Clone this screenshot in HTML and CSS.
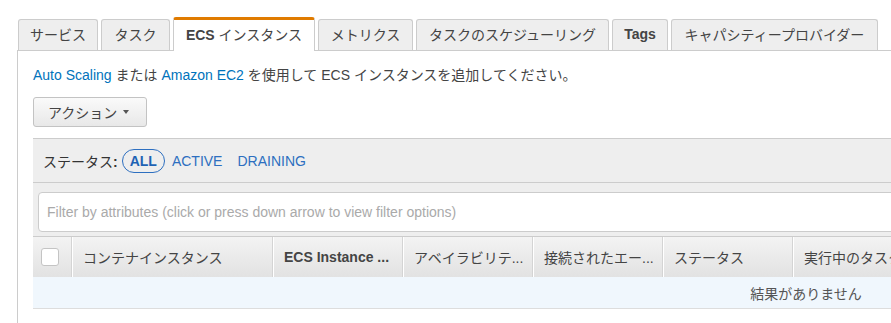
FILE: index.html
```html
<!DOCTYPE html>
<html lang="ja">
<head>
<meta charset="utf-8">
<link rel="stylesheet" href="styles.css">
</head>
<body>
<div class="page">
  <div class="tabs">
    <div class="tab"><span>サービス</span></div>
    <div class="tab"><span>タスク</span></div>
    <div class="tab active"><span><b>ECS</b> インスタンス</span></div>
    <div class="tab"><span>メトリクス</span></div>
    <div class="tab"><span>タスクのスケジューリング</span></div>
    <div class="tab"><span><b>Tags</b></span></div>
    <div class="tab"><span>キャパシティープロバイダー</span></div>
  </div>
  <div class="panel">
    <p class="intro"><a class="link">Auto Scaling</a> または <a class="link">Amazon EC2</a> を使用して ECS インスタンスを追加してください。</p>
    <button class="btn">アクション <span class="caret"></span></button>
    <div class="grid">
      <div class="statusbar">
        <span class="label">ステータス<b>:</b></span>
        <span class="pill">ALL</span>
        <span class="flink">ACTIVE</span>
        <span class="flink">DRAINING</span>
      </div>
      <div class="filterbar">
        <div class="filter">Filter by attributes (click or press down arrow to view filter options)</div>
      </div>
      <div class="thead">
        <div class="th th-check"><span class="checkbox"></span></div>
        <div class="th w201">コンテナインスタンス</div>
        <div class="th w130"><b>ECS Instance ...</b></div>
        <div class="th w130">アベイラビリテ...</div>
        <div class="th w130">接続されたエー...</div>
        <div class="th w130">ステータス</div>
        <div class="th wrest">実行中のタスク数</div>
      </div>
      <div class="empty">結果がありません</div>
    </div>
  </div>
</div>
</body>
</html>
```

FILE: styles.css
```css
* { box-sizing: border-box; }
html, body { margin: 0; padding: 0; background: #fff; overflow: hidden; }
body {
  font-family: "Liberation Sans", "Noto Sans CJK JP", sans-serif;
  font-size: 14px;
  color: #444;
  width: 891px;
  height: 323px;
}
b { font-weight: 700; }
.page { padding: 17px 0 0 17px; width: 1700px; height: 323px; overflow: hidden; display: flex; flex-direction: column; }

.tabs {
  display: flex;
  align-items: flex-end;
  gap: 3px;
  padding-left: 1px;
  height: 33px;
  flex: none;
}
.tab {
  height: 32px;
  padding: 0 10px 3px;
  background: #eee;
  border: 1px solid #ccc;
  border-bottom: none;
  border-radius: 3px 3px 0 0;
  display: flex;
  align-items: center;
  justify-content: center;
  color: #444;
  white-space: nowrap;
  margin-bottom: -1px;
}
.tab.active {
  background: #fff;
  height: 34px;
  border-top: 3px solid #e07b00;
  padding-bottom: 3px;
  position: relative;
  z-index: 1;
}
.tabs .tab:nth-child(1) { width: 80px; }
.tabs .tab:nth-child(2) { width: 69px; }
.tabs .tab:nth-child(3) { width: 142px; }
.tabs .tab:nth-child(4) { width: 95px; }
.tabs .tab:nth-child(5) { width: 193px; }
.tabs .tab:nth-child(6) { width: 56px; }
.tabs .tab:nth-child(7) { width: 207px; }

.panel {
  flex: 1;
  border-top: 1px solid #ccc;
  border-left: 1px solid #ccc;
  padding: 16px 0 0 15px;
}
.intro { margin: 0; line-height: 16px; color: #444; }
.link { color: #0073bb; text-decoration: none; }

.btn {
  display: flex;
  align-items: center;
  gap: 6px;
  margin-top: 14px;
  height: 30px;
  width: 114px;
  padding: 0 0 0 14px;
  font: inherit;
  color: #444;
  background: linear-gradient(#fafafa, #e8e8e8);
  border: 1px solid #c3c3c3;
  border-radius: 3px;
}
.caret {
  width: 0; height: 0;
  border-left: 3.5px solid transparent;
  border-right: 3.5px solid transparent;
  border-top: 4px solid #555;
}

.grid { margin-top: 11px; width: 1546px; }
.statusbar {
  height: 45px;
  background: #eee;
  border-top: 1px solid #ccc;
  border-bottom: 1px solid #ccc;
  display: flex;
  align-items: center;
  padding-left: 10px;
}
.label { color: #333; margin-right: 4px; }
.pill {
  font-weight: 700;
  color: #1e63b4;
  border: 1px solid #2d6fc0;
  border-radius: 12px;
  height: 24px;
  padding: 0 7px;
  display: flex;
  align-items: center;
  margin-right: 7px;
}
.flink { color: #2d6fc0; margin-right: 15px; }

.filterbar {
  background: #eee;
  height: 53px;
  padding: 9px 0 0 5px;
}
.filter {
  height: 40px;
  background: #fff;
  border: 1px solid #ccc;
  border-radius: 4px;
  display: flex;
  align-items: center;
  padding-left: 8px;
  color: #aaa;
}

.thead {
  display: flex;
  height: 41px;
  border-top: 1px solid #ccc;
  background: linear-gradient(#f3f3f3, #e2e2e2);
}
.th {
  display: flex;
  align-items: center;
  padding-left: 10px;
  border-right: 1px solid #fff;
  box-shadow: inset -1px 0 0 #d4d4d4;
  color: #444;
  white-space: nowrap;
}
.th-check { width: 40px; padding-left: 8px; }
.w201 { width: 201px; }
.w130 { width: 130px; }
.wrest { flex: 1; border-right: none; box-shadow: none; }
.checkbox {
  width: 18px; height: 18px;
  background: #fff;
  border: 1px solid #c4c4c4;
  border-radius: 3px;
}
.empty {
  height: 32px;
  background: #f0f7fd;
  border-bottom: 1px solid #ddd;
  display: flex;
  align-items: center;
  justify-content: center;
  color: #555;
}
```
